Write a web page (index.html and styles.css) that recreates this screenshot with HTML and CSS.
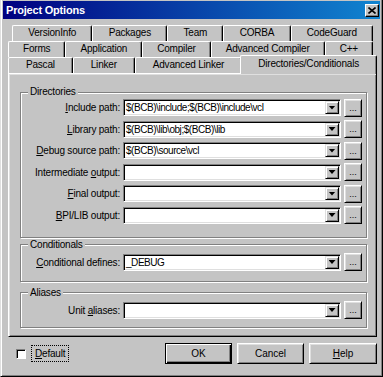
FILE: index.html
```html
<!DOCTYPE html>
<html lang="en">
  <head>
    <meta charset="UTF-8" />
    <meta name="viewport" content="width=device-width, initial-scale=1.0" />
    <title>Project Options</title>
    <link rel="stylesheet" href="styles.css">
  </head>
  <body>
    <div class="window">
      <div class="titlebar">
        <span class="title">Project Options</span>
        <span class="close">
          <svg width="8" height="7" viewBox="0 0 8 7">
            <path d="M0.5 0.5L7.5 6.5M7.5 0.5L0.5 6.5" stroke="#000" stroke-width="1.6" />
          </svg>
        </span>
      </div>
      <div class="content">
        <div class="tabs">
          <div class="tab-row top-row">
            <div class="tab">VersionInfo</div>
            <div class="tab">Packages</div>
            <div class="tab">Team</div>
            <div class="tab">CORBA</div>
            <div class="tab">CodeGuard</div>
          </div>
          <div class="tab-row mid-row">
            <div class="tab">Forms</div>
            <div class="tab">Application</div>
            <div class="tab">Compiler</div>
            <div class="tab">Advanced Compiler</div>
            <div class="tab">C++</div>
          </div>
          <div class="tab-row bottom-row">
            <div class="tab">Pascal</div>
            <div class="tab">Linker</div>
            <div class="tab">Advanced Linker</div>
            <div class="tab active">Directories/Conditionals</div>
          </div>
        </div>
        <div class="page">
          <fieldset class="group dirs">
            <legend>Directories</legend>
            <div class="fields">
              <label><u>I</u>nclude path:</label>
              <div class="combo"><span class="value">$(BCB)\include;$(BCB)\include\vcl</span><span class="drop"></span></div>
              <button class="more">...</button>

              <label><u>L</u>ibrary path:</label>
              <div class="combo"><span class="value">$(BCB)\lib\obj;$(BCB)\lib</span><span class="drop"></span></div>
              <button class="more">...</button>

              <label><u>D</u>ebug source path:</label>
              <div class="combo"><span class="value">$(BCB)\source\vcl</span><span class="drop"></span></div>
              <button class="more">...</button>

              <label>Intermediate <u>o</u>utput:</label>
              <div class="combo"><span class="value"></span><span class="drop"></span></div>
              <button class="more">...</button>

              <label><u>F</u>inal output:</label>
              <div class="combo"><span class="value"></span><span class="drop"></span></div>
              <button class="more">...</button>

              <label><u>B</u>PI/LIB output:</label>
              <div class="combo"><span class="value"></span><span class="drop"></span></div>
              <button class="more">...</button>
            </div>
          </fieldset>
          <fieldset class="group conds">
            <legend>Conditionals</legend>
            <div class="fields">
              <label><u>C</u>onditional defines:</label>
              <div class="combo"><span class="value">_DEBUG</span><span class="drop"></span></div>
              <button class="more">...</button>
            </div>
          </fieldset>
          <fieldset class="group aliases">
            <legend>Aliases</legend>
            <div class="fields">
              <label>Unit <u>a</u>liases:</label>
              <div class="combo"><span class="value"></span><span class="drop"></span></div>
              <button class="more">...</button>
            </div>
          </fieldset>
        </div>
        <div class="footer">
          <span class="check"></span>
          <span class="focus"><u>D</u>efault</span>
          <button class="btn default">OK</button>
          <button class="btn">Cancel</button>
          <button class="btn"><u>H</u>elp</button>
        </div>
      </div>
    </div>
  </body>
</html>
```

FILE: styles.css
```css
* {
  margin: 0;
  padding: 0;
  box-sizing: border-box;
}
body {
  background: #c4c4c4;
  font-family: "Liberation Sans", Arial, sans-serif;
  font-size: 10px;
  color: #000;
}
.window {
  width: 383px;
  height: 377px;
  padding: 1px 2px 1px 2px;
  border-left: 1px solid #dfdfdf;
  border-right: 1px solid #000;
  border-bottom: 1px solid #000;
  box-shadow: inset 1px 0 #fff, inset -1px -1px #808080;
  background: #c4c4c4;
}
.titlebar {
  height: 18px;
  display: flex;
  align-items: center;
  justify-content: space-between;
  padding: 0 1px 0 3px;
  background: linear-gradient(90deg, #000080, #1084d0);
}
.title {
  color: #fff;
  font-weight: bold;
  font-size: 11px;
  letter-spacing: -0.2px;
}
.close {
  width: 14px;
  height: 13px;
  display: flex;
  align-items: center;
  justify-content: center;
  background: #c4c4c4;
  border: 1px solid;
  border-color: #fff #000 #000 #fff;
  box-shadow: inset -1px -1px #808080;
}
.content {
  padding: 6px 3px 0 5px;
}

/* tabs */
.tab-row {
  display: flex;
  height: 16px;
}
.top-row {
  margin: 0 4px;
}
.mid-row {
  margin: 0 4px 0 0;
}
.bottom-row {
  margin: 0 2px 0 0;
}
.tab {
  flex: 1 1 auto;
  text-align: center;
  line-height: 14px;
  white-space: nowrap;
  letter-spacing: -0.2px;
  background: #c4c4c4;
  border-top: 1px solid #fff;
  border-left: 1px solid #fff;
  border-right: 1px solid #000;
  border-radius: 2px 2px 0 0;
  box-shadow: inset -1px 0 #808080;
}
.tab.active {
  position: relative;
  z-index: 1;
  margin: -2px -2px -1px -2px;
  line-height: 16px;
}

/* page */
.page {
  height: 264px;
  padding: 12px 9px 0 11px;
  border: 1px solid;
  border-color: #fff #000 #000 #fff;
  box-shadow: inset 1px 1px #dfdfdf, inset -1px -1px #808080;
}
.group {
  min-width: 0;
  border: 1px solid #808080;
  box-shadow: inset 1px 1px #fff, 1px 1px #fff;
  padding: 1px 4px 13px 0;
}
.group legend {
  margin-left: 7px;
  padding: 0 2px;
  line-height: 12px;
  background: #c4c4c4;
  letter-spacing: -0.2px;
}
.conds {
  margin-top: 1px;
  padding: 3px 4px 10px 0;
}
.aliases {
  margin-top: 5px;
  padding: 3px 4px 8px 0;
}
.fields {
  display: grid;
  grid-template-columns: 99px 218px 18px;
  grid-auto-rows: 17px;
  column-gap: 3px;
  row-gap: 4.5px;
}
.fields label {
  text-align: right;
  line-height: 17px;
  white-space: nowrap;
  letter-spacing: -0.2px;
}
.combo {
  display: flex;
  height: 17px;
  padding: 1px;
  background: #fff;
  border: 1px solid;
  border-color: #808080 #fff #fff #808080;
  box-shadow: inset 1px 1px #000, inset -1px -1px #dfdfdf;
}
.value {
  flex: 1;
  padding-left: 1px;
  line-height: 13px;
  white-space: nowrap;
  overflow: hidden;
  letter-spacing: -0.45px;
}
.drop {
  width: 14px;
  display: flex;
  align-items: center;
  justify-content: center;
  background: #c4c4c4;
  border: 1px solid;
  border-color: #dfdfdf #000 #000 #dfdfdf;
  box-shadow: inset 1px 1px #fff, inset -1px -1px #808080;
}
.drop::after {
  content: "";
  width: 7px;
  height: 4px;
  background: #000;
  clip-path: polygon(0 0, 100% 0, 50% 100%);
}
.more {
  align-self: center;
  height: 18px;
  font: inherit;
  font-size: 9px;
  line-height: 12px;
  color: #000;
  background: #c4c4c4;
  border: 1px solid;
  border-color: #fff #000 #000 #fff;
  box-shadow: inset 1px 1px #dfdfdf, inset -1px -1px #808080;
}

/* footer */
.footer {
  display: flex;
  align-items: center;
  height: 21px;
  margin-top: 6px;
  padding-left: 8px;
}
.check {
  width: 10px;
  height: 10px;
  background: #fff;
  border: 1px solid;
  border-color: #808080 #fff #fff #808080;
  box-shadow: inset 1px 1px #000;
}
.focus {
  margin-left: 5px;
  padding: 2px 3px;
  border: 1px dotted #000;
  letter-spacing: -0.2px;
}
.btn {
  width: 67px;
  height: 21px;
  margin-left: 5px;
  font: inherit;
  color: #000;
  background: #c4c4c4;
  border: 1px solid;
  border-color: #fff #000 #000 #fff;
  box-shadow: inset 1px 1px #dfdfdf, inset -1px -1px #808080;
}
.btn.default {
  margin-left: auto;
  border-color: #000;
  box-shadow: inset 1px 1px #fff, inset -1px -1px #000, inset -2px -2px #808080;
}
.btn:last-child {
  width: 68px;
}
```
